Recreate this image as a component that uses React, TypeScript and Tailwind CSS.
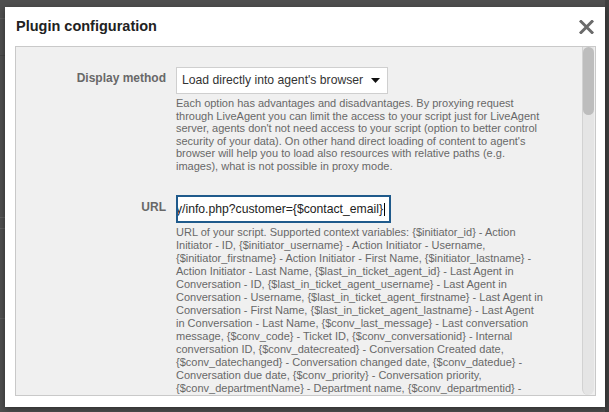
const displayHelp = [
  "Each option has advantages and disadvantages. By proxying request",
  "through LiveAgent you can limit the access to your script just for LiveAgent",
  "server, agents don't not need access to your script (option to better control",
  "security of your data). On other hand direct loading of content to agent's",
  "browser will help you to load also resources with relative paths (e.g.",
  "images), what is not possible in proxy mode.",
];

const urlHelp = [
  "URL of your script. Supported context variables: {$initiator_id} - Action",
  "Initiator - ID, {$initiator_username} - Action Initiator - Username,",
  "{$initiator_firstname} - Action Initiator - First Name, {$initiator_lastname} -",
  "Action Initiator - Last Name, {$last_in_ticket_agent_id} - Last Agent in",
  "Conversation - ID, {$last_in_ticket_agent_username} - Last Agent in",
  "Conversation - Username, {$last_in_ticket_agent_firstname} - Last Agent in",
  "Conversation - First Name, {$last_in_ticket_agent_lastname} - Last Agent",
  "in Conversation - Last Name, {$conv_last_message} - Last conversation",
  "message, {$conv_code} - Ticket ID, {$conv_conversationid} - Internal",
  "conversation ID, {$conv_datecreated} - Conversation Created date,",
  "{$conv_datechanged} - Conversation changed date, {$conv_datedue} -",
  "Conversation due date, {$conv_priority} - Conversation priority,",
  "{$conv_departmentName} - Department name, {$conv_departmentid} -",
];

const HelpText = ({ lines, leading }: { lines: string[]; leading: string }) => (
  <div className={`mt-[3px] text-[11px] text-[#686868] ${leading}`}>
    {lines.map((line) => (
      <div key={line} className="whitespace-nowrap">
        {line}
      </div>
    ))}
  </div>
);

export default function App() {
  return (
    <div className="relative h-[412px] w-[609px] overflow-hidden bg-[#4e4e4e] pl-[5px] pt-[7px] font-['Liberation_Sans',Arial,sans-serif]">
      {/* dimmed page behind the modal */}
      <div className="absolute left-0 top-[18px] h-px w-full bg-[#5a5a5a]" />
      <div className="absolute left-0 top-[55px] h-px w-full bg-[#444]" />
      <div className="absolute left-0 top-[217px] h-px w-full bg-[#5e5e5e]" />
      <div className="absolute left-0 top-[228px] h-px w-full bg-[#5e5e5e]" />
      <div className="absolute left-0 top-[318px] h-px w-full bg-[#5a5a5a]" />
      <div className="absolute right-0 top-0 h-full w-[4px] bg-[#3f3f3f]" />

      <div className="relative flex h-[400px] w-[600px] flex-col bg-white shadow-[0_2px_6px_rgba(0,0,0,0.4)]">
        <div className="flex h-[39px] items-start justify-between pl-[11px] pr-[11px] pt-[11px]">
          <div className="text-[14.5px] font-bold leading-[17px] text-[#222]">
            Plugin configuration
          </div>
          <svg width="15" height="14" viewBox="0 0 15 14" className="mt-[2px]">
            <path
              d="M2 1.5 L13 12.5 M13 1.5 L2 12.5"
              stroke="#6a6a6a"
              strokeWidth="3"
              strokeLinecap="square"
            />
          </svg>
        </div>

        <div className="mb-[11px] ml-[10px] mr-[9px] flex min-h-0 flex-1 overflow-hidden border border-[#c9c9c9] bg-[#f0f0f0]">
          <div className="min-w-0 flex-1 pt-[20px]">
            <div className="flex items-start">
              <div className="w-[150px] shrink-0 pt-[4px] text-right text-[12px] font-bold leading-[14px] text-[#686868]">
                Display method
              </div>
              <div className="ml-[10px] flex flex-col">
                <div className="flex h-[27px] w-[212px] items-center justify-between border border-[#cfcfcf] bg-white pl-[5px] pr-[7px] text-[12.2px] text-[#333]">
                  <span className="whitespace-nowrap">Load directly into agent's browser</span>
                  <svg width="9" height="5" viewBox="0 0 9 5">
                    <path d="M0 0 H9 L4.5 5 Z" fill="#111" />
                  </svg>
                </div>
                <HelpText lines={displayHelp} leading="leading-[12.5px]" />
              </div>
            </div>

            <div className="mt-[23px] flex items-start">
              <div className="w-[150px] shrink-0 pt-[5px] text-right text-[12px] font-bold leading-[14px] text-[#686868]">
                URL
              </div>
              <div className="ml-[10px] flex flex-col">
                <div className="flex h-[28px] w-[215px] items-center justify-end overflow-hidden border-2 border-[#1f5a8b] bg-white pr-[4px] text-[12.2px] text-[#222]">
                  <span className="whitespace-nowrap">
                    y/info.php?customer={"{"}$contact_email{"}"}
                  </span>
                  <span className="ml-px h-[13px] w-px shrink-0 bg-black" />
                </div>
                <HelpText lines={urlHelp} leading="leading-[13px]" />
              </div>
            </div>
          </div>

          <div className="mr-px flex w-[12px] shrink-0 flex-col rounded-b-full border-l border-[#d2d2d2] bg-[#e5e5e5]">
            <div className="h-[68px] rounded-full bg-[#bdbdbd]" />
          </div>
        </div>
      </div>
    </div>
  );
}
